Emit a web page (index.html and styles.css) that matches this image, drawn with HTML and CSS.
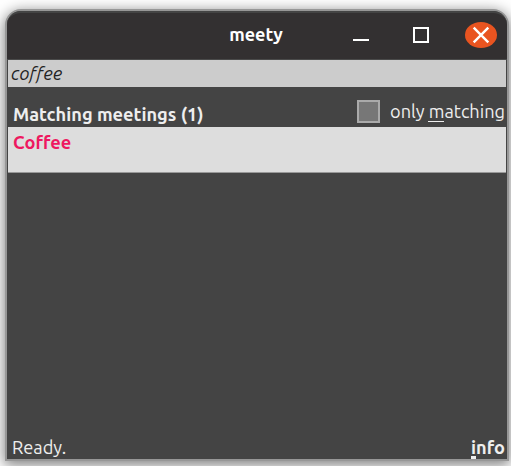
FILE: index.html
```html
<!DOCTYPE html>
<html lang="en">
<head>
<meta charset="utf-8">
<title>meety</title>
<link rel="stylesheet" href="styles.css">
</head>
<body>
<main class="window">
  <header class="titlebar">
    <h1 class="title">meety</h1>
    <div class="controls">
      <svg width="16" height="16" viewBox="0 0 16 16"><path d="M0 13h16" stroke="#fff" stroke-width="2"/></svg>
      <svg width="16" height="16" viewBox="0 0 16 16"><rect x="1" y="1" width="14" height="14" fill="none" stroke="#fff" stroke-width="2"/></svg>
      <svg class="close" width="32" height="26" viewBox="0 0 32 26"><ellipse cx="16" cy="13" rx="16" ry="13" fill="#e95420"/><path d="M8.7 5.7l14.6 14.6M23.3 5.7L8.7 20.3" stroke="#fff" stroke-width="2.4"/></svg>
    </div>
  </header>
  <div class="search"><span class="query">coffee</span></div>
  <div class="heading">
    <h2 class="count">Matching meetings (1)</h2>
    <label class="filter"><span class="box"></span><span class="label">only <span class="key">m</span>atching</span></label>
  </div>
  <div class="meeting"><span class="name">Coffee</span></div>
  <footer class="status"><span class="ready">Ready.</span><span class="info"><span class="mark">i</span>nfo</span></footer>
</main>
</body>
</html>
```
FILE: styles.css
```css
* { box-sizing: border-box; }
body {
  margin: 0;
  padding: 9px 2px 5px 5px;
  height: 466px;
  overflow: hidden;
  background: #fff;
  font: 18.2px/24px Ubuntu, "Noto Sans", sans-serif;
  color: #eee;
}
h1, h2 { margin: 0; font-size: inherit; }
.window {
  width: 504px;
  height: 452px;
  display: flex;
  flex-direction: column;
  border: 2px solid #979797;
  border-radius: 16px 16px 0 0;
  background: #444;
  box-shadow: 0 3px 14px 1px rgba(0, 0, 0, .5);
}
.titlebar {
  height: 49px;
  flex: none;
  display: grid;
  grid-template-columns: 1fr auto 1fr;
  align-items: center;
  padding-bottom: 2px;
  border-top: 2px solid #444;
  border-bottom: 1px solid #4a4a4a;
  border-radius: 14px 14px 0 0;
  background: #333031;
  color: #fff;
}
.title { grid-column: 2; font-size: 18px; margin: 0 2px 2px 0; }
.controls { display: flex; align-items: center; justify-content: flex-end; gap: 44px; padding-right: 10px; }
.controls svg { display: block; }
.controls .close { margin-left: -8px; }
.search { height: 27px; margin: 0 1px; padding: 1px 3px; background: #ccc; color: #222; font-style: italic; }
.query, .count, .label, .name, .ready, .info { display: inline-block; white-space: nowrap; }
.query { letter-spacing: .2px; }
.heading { height: 40px; display: flex; justify-content: space-between; padding: 13px 2px 0 6px; }
.count { padding-top: 2px; }
.filter { display: flex; align-items: flex-start; gap: 10px; }
.box { width: 23px; height: 23px; border: 2px solid #aaa; background: #777; }
.label { margin-top: -1px; }
.key { display: inline-block; height: 23px; margin-left: -1px; padding-left: 1px; border-bottom: 1px solid #eee; }
.meeting { height: 46px; margin: 0 1px; padding: 3px 5px; border-bottom: 1px solid #999; background: #ddd; color: #ee1860; font-weight: bold; }
.status { margin-top: auto; height: 24px; display: flex; justify-content: space-between; padding: 0 2px 0 5px; }
.info { position: relative; font-weight: bold; }
.mark::after { content: ""; position: absolute; left: 0; bottom: 0; width: 5px; height: 3px; background: #eee; }
```
